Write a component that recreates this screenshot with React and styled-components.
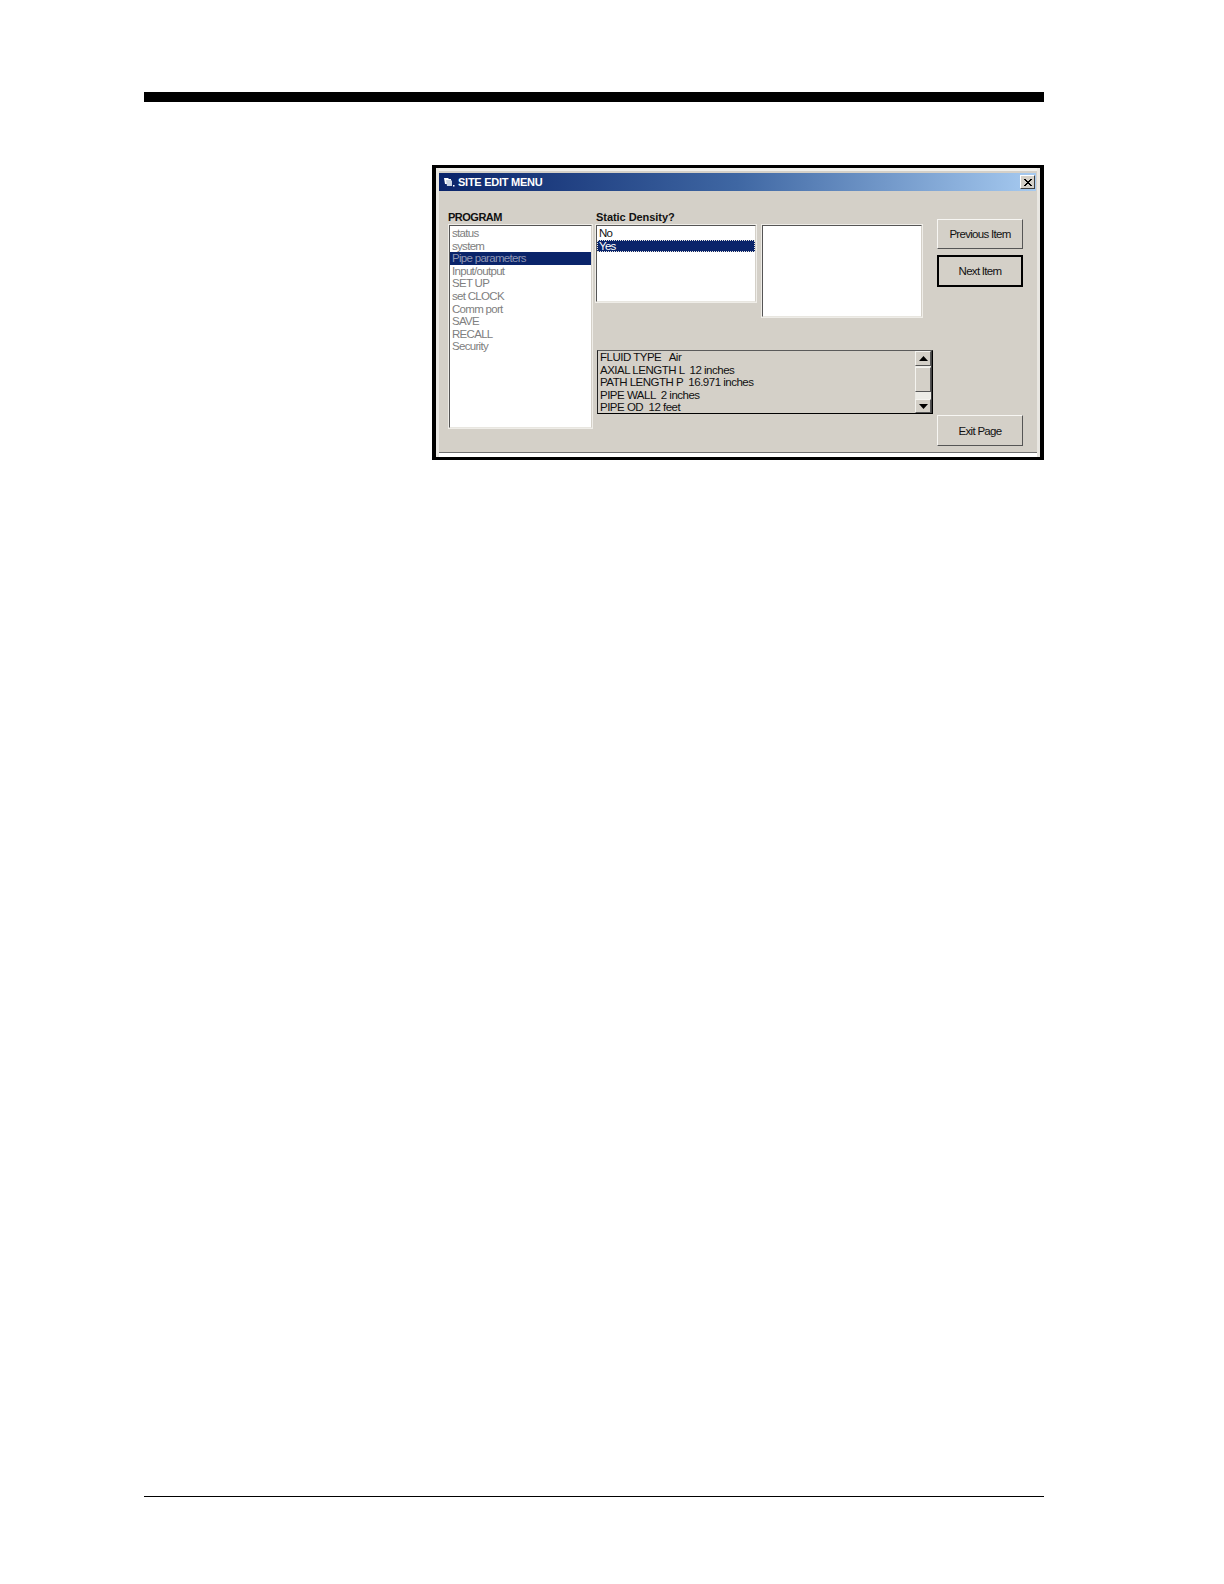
import React from 'react';
import styled, { createGlobalStyle } from 'styled-components';

const GlobalStyle = createGlobalStyle`
  html, body {
    margin: 0;
    padding: 0;
    background: #ffffff;
  }
  body {
    font-family: "Liberation Sans", Arial, sans-serif;
  }
`;

const Page = styled.div`
  width: 1224px;
  height: 1584px;
  box-sizing: border-box;
  padding: 92px 180px 87px 144px;
  display: flex;
  flex-direction: column;
`;

const TopRule = styled.div`
  height: 10px;
  background: #000000;
`;

const Figure = styled.div`
  margin-top: 63px;
  margin-left: 288px;
`;

const Window = styled.div`
  width: 612px;
  height: 295px;
  box-sizing: border-box;
  border: solid #000000;
  border-width: 3px 4px;
  background: #d4d0c8;
  padding: 5px 4px 0 3px;
  box-shadow: inset 3px 0 0 #e9e7e2, inset -3px 0 0 #e9e7e2, inset 0 3px 0 #f0efeb, inset 0 -4px 0 #ffffff, inset 0 -5px 0 #707070;
`;

const TitleBar = styled.div`
  height: 18px;
  display: flex;
  align-items: center;
  padding: 0 1px 0 4px;
  background: linear-gradient(90deg, #0a246a 0%, #3f67a3 50%, #a6caf0 100%);
`;

const TitleText = styled.span`
  margin-left: 3px;
  flex: 1;
  color: #ffffff;
  font-size: 11px;
  font-weight: 700;
  letter-spacing: -0.25px;
`;

const CloseButton = styled.div`
  width: 15px;
  height: 14px;
  box-sizing: border-box;
  background: #d4d0c8;
  border: 1px solid;
  border-color: #ffffff #404040 #404040 #ffffff;
  display: flex;
  align-items: center;
  justify-content: center;
`;

const Body = styled.div`
  display: flex;
  padding: 19px 0 0 9px;
`;

const Column = styled.div`
  display: flex;
  flex-direction: column;
`;

const Label = styled.div`
  height: 14px;
  line-height: 15px;
  margin-left: ${(p) => p.$indent || 0}px;
  font-size: 11px;
  font-weight: 700;
  color: #111111;
  letter-spacing: ${(p) => p.$spacing || 0}px;
`;

const ListBox = styled.div`
  width: ${(p) => p.$width}px;
  height: ${(p) => p.$height}px;
  box-sizing: border-box;
  padding-top: 1px;
  background: #ffffff;
  border: 2px solid;
  border-color: #555555 #d4d0c8 #e8e6e0 #555555;
  outline: 1px solid #efede8;
  outline-offset: -1px;
  overflow: hidden;
`;

const ListRow = styled.div`
  height: 12.6px;
  line-height: 12.6px;
  padding-left: 2px;
  font-size: 11.5px;
  letter-spacing: -0.7px;
  white-space: nowrap;
  color: ${(p) => (p.$selected ? (p.$dim ? '#8f96b4' : '#ffffff') : p.$dim ? '#808080' : '#111111')};
  background: ${(p) => (p.$selected ? '#0a246a' : 'transparent')};
  outline: ${(p) => (p.$focus ? '1px dotted #e8e6e0' : 'none')};
  outline-offset: -1px;
`;

const MiddleArea = styled(Column)`
  width: 338px;
  margin-left: 2px;
`;

const TopRow = styled.div`
  display: flex;
  align-items: flex-start;
`;

const BlankBox = styled(ListBox)`
  margin-top: 14px;
  margin-left: 4px;
`;

const LogBox = styled.div`
  width: 336px;
  height: 64px;
  margin-top: 32px;
  margin-left: 2px;
  box-sizing: border-box;
  display: flex;
  border: 1px solid;
  border-color: #5a5a5a #000000 #000000 #222222;
`;

const LogLines = styled.div`
  flex: 1;
  padding: 0 0 0 2px;
`;

const LogLine = styled.div`
  height: 12.6px;
  line-height: 12.6px;
  font-size: 11.5px;
  letter-spacing: -0.5px;
  color: #111111;
  white-space: pre;
`;

const ScrollBar = styled.div`
  width: 16px;
  display: flex;
  flex-direction: column;
  background: #ecebe6;
  border-right: 1px solid #444444;
`;

const ScrollButton = styled.div`
  height: ${(p) => p.$height}px;
  box-sizing: border-box;
  background: #d4d0c8;
  border: 1px solid;
  border-color: #f4f3ef #555555 #555555 #f4f3ef;
  display: flex;
  align-items: center;
  justify-content: center;
`;

const ScrollThumb = styled(ScrollButton)`
  margin-top: 1px;
`;

const ScrollTrack = styled.div`
  flex: 1;
`;

const ButtonColumn = styled(Column)`
  width: 86px;
  height: 237px;
  margin-left: 4px;
  padding-top: 9px;
  box-sizing: border-box;
`;

const PushButton = styled.div`
  width: 86px;
  height: ${(p) => (p.$focus ? 32 : 30)}px;
  box-sizing: border-box;
  display: flex;
  align-items: center;
  justify-content: center;
  background: #d4d0c8;
  font-size: 11.5px;
  letter-spacing: -0.7px;
  color: #111111;
  border: ${(p) => (p.$focus ? '2px' : '1px')} solid;
  border-color: ${(p) => (p.$focus ? '#000000' : '#f7f6f3 #555555 #555555 #f7f6f3')};
  margin-bottom: 6px;
`;

const ExitButton = styled(PushButton)`
  height: 31px;
  margin-top: auto;
  margin-bottom: 1px;
`;

const FooterRule = styled.div`
  height: 1px;
  margin-top: auto;
  background: #000000;
`;

const programItems = ['status', 'system', 'Pipe parameters', 'Input/output', 'SET UP', 'set CLOCK', 'Comm port', 'SAVE', 'RECALL', 'Security'];
const logLines = ['FLUID TYPE   Air', 'AXIAL LENGTH L  12 inches', 'PATH LENGTH P  16.971 inches', 'PIPE WALL  2 inches', 'PIPE OD  12 feet'];

const FolderIcon = () => (
  <svg width="12" height="10" viewBox="0 0 12 10">
    <path d="M1 1h4l1 1h2v5H2z" fill="#ffffff" />
    <path d="M3 3h5l1 1v5H4z" fill="#c9d4e4" />
    <rect x="10" y="8" width="1.5" height="1.5" fill="#ffffff" />
  </svg>
);

const CloseIcon = () => (
  <svg width="10" height="9" viewBox="0 0 10 9">
    <path d="M1 1l7 7M2 1l7 7M8 1L1 8M9 1L2 8" stroke="#000000" strokeWidth="1" fill="none" />
  </svg>
);

const Arrow = ({ down }) => (
  <svg width="9" height="5" viewBox="0 0 9 5">
    <path d={down ? 'M0 0h9L4.5 5z' : 'M4.5 0L9 5H0z'} fill="#000000" />
  </svg>
);

export default function App() {
  return (
    <>
      <GlobalStyle />
      <Page>
        <TopRule />
        <Figure>
          <Window>
            <TitleBar>
              <FolderIcon />
              <TitleText>SITE EDIT MENU</TitleText>
              <CloseButton>
                <CloseIcon />
              </CloseButton>
            </TitleBar>
            <Body>
              <Column>
                <Label $spacing={-0.5}>PROGRAM</Label>
                <ListBox $width={145} $height={205}>
                  {programItems.map((item) => (
                    <ListRow key={item} $dim $selected={item === 'Pipe parameters'}>
                      {item}
                    </ListRow>
                  ))}
                </ListBox>
              </Column>
              <MiddleArea>
                <TopRow>
                  <Column>
                    <Label $indent={1} $spacing={-0.05}>Static Density?</Label>
                    <ListBox $width={162} $height={79}>
                      <ListRow>No</ListRow>
                      <ListRow $selected $focus>Yes</ListRow>
                    </ListBox>
                  </Column>
                  <BlankBox $width={162} $height={94} />
                </TopRow>
                <LogBox>
                  <LogLines>
                    {logLines.map((line) => (
                      <LogLine key={line}>{line}</LogLine>
                    ))}
                  </LogLines>
                  <ScrollBar>
                    <ScrollButton $height={15}>
                      <Arrow />
                    </ScrollButton>
                    <ScrollThumb $height={25} />
                    <ScrollTrack />
                    <ScrollButton $height={14}>
                      <Arrow down />
                    </ScrollButton>
                  </ScrollBar>
                </LogBox>
              </MiddleArea>
              <ButtonColumn>
                <PushButton>Previous Item</PushButton>
                <PushButton $focus>Next Item</PushButton>
                <ExitButton>Exit Page</ExitButton>
              </ButtonColumn>
            </Body>
          </Window>
        </Figure>
        <FooterRule />
      </Page>
    </>
  );
}
